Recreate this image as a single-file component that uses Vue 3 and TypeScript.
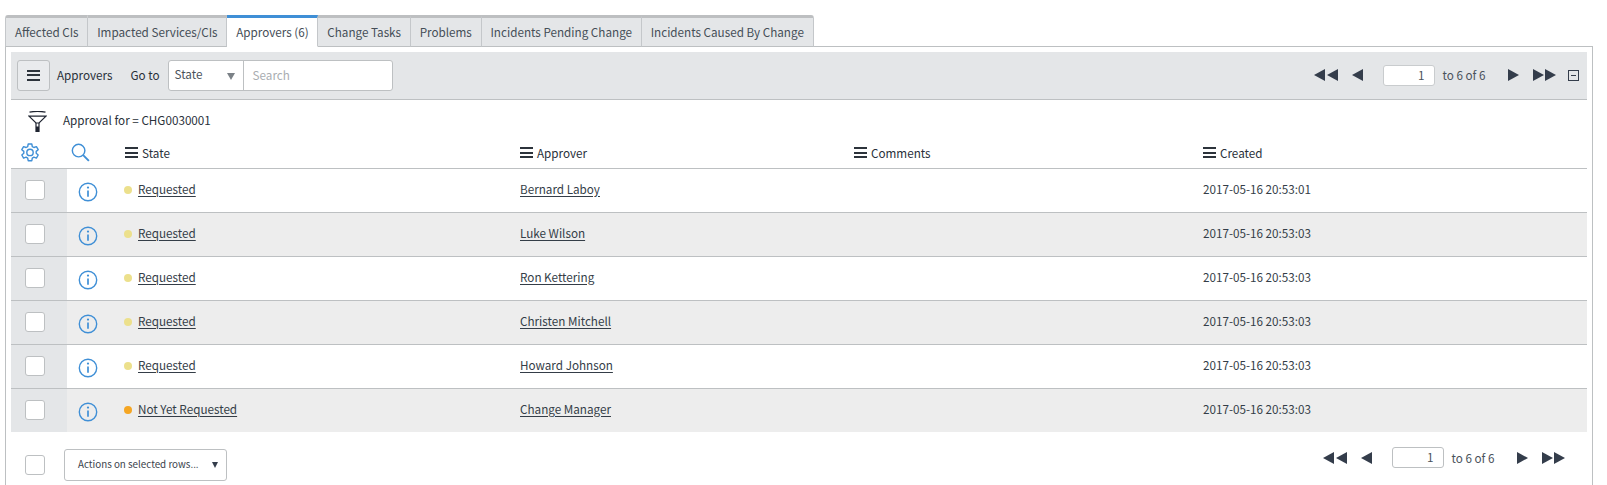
<script setup lang="ts">
const tabs = [
  { label: 'Affected CIs' },
  { label: 'Impacted Services/CIs' },
  { label: 'Approvers (6)', active: true },
  { label: 'Change Tasks' },
  { label: 'Problems' },
  { label: 'Incidents Pending Change' },
  { label: 'Incidents Caused By Change' },
]
const rows = [
  { state: 'Requested', dot: '#ece08c', approver: 'Bernard Laboy', created: '2017-05-16 20:53:01' },
  { state: 'Requested', dot: '#ece08c', approver: 'Luke Wilson', created: '2017-05-16 20:53:03' },
  { state: 'Requested', dot: '#ece08c', approver: 'Ron Kettering', created: '2017-05-16 20:53:03' },
  { state: 'Requested', dot: '#ece08c', approver: 'Christen Mitchell', created: '2017-05-16 20:53:03' },
  { state: 'Requested', dot: '#ece08c', approver: 'Howard Johnson', created: '2017-05-16 20:53:03' },
  { state: 'Not Yet Requested', dot: '#f5a623', approver: 'Change Manager', created: '2017-05-16 20:53:03' },
]
const columns = ['State', 'Approver', 'Comments', 'Created']
</script>

<template>
  <div class="page">
    <div class="tabs">
      <div v-for="t in tabs" :key="t.label" class="tab" :class="{ active: t.active }">{{ t.label }}</div>
    </div>
    <div class="panel">
      <div class="toolbar">
        <button class="menu-btn" aria-label="Menu"><span class="burger big"></span></button>
        <span class="title">Approvers</span>
        <span class="goto">Go to</span>
        <div class="search">
          <div class="field">State<span class="caret"></span></div>
          <div class="placeholder">Search</div>
        </div>
        <div class="pager">
          <span class="tri-l"></span><span class="tri-l"></span>
          <span class="tri-l solo"></span>
          <div class="page-input">1</div>
          <span class="count">to 6 of 6</span>
          <span class="tri-r solo-r"></span>
          <span class="tri-r"></span><span class="tri-r"></span>
          <span class="collapse"></span>
        </div>
      </div>

      <div class="filter">
        <svg class="funnel" width="19" height="21" viewBox="0 0 19 21" fill="none" stroke="#1f2430" stroke-width="1.2">
          <path d="M1.5 1.2C6 .2 13 .2 17.5 1.2" />
          <path d="M1 5.2h17L11 12H8z" />
          <path d="M8 12v8.4h3V12" />
          <path d="M8 15.5h3v5H8z" fill="#1f2430" stroke="none" />
        </svg>
        <span>Approval for = CHG0030001</span>
      </div>

      <div class="grid head">
        <div class="cell gear">
          <svg width="20" height="20" viewBox="0 0 20 20" fill="none" stroke="#3f8fd6" stroke-width="1.4" stroke-linejoin="round">
            <path d="M8.2 1h3.6l.5 2.6 1.6.9 2.5-.9 1.8 3.1-2 1.7v1.9l2 1.7-1.8 3.1-2.5-.9-1.6.9-.5 2.6H8.2l-.5-2.6-1.6-.9-2.5.9-1.8-3.1 2-1.7V8.4l-2-1.7 1.8-3.1 2.5.9 1.6-.9z" />
            <circle cx="10" cy="9.4" r="3.2" />
          </svg>
        </div>
        <div class="cell mag">
          <svg width="19" height="19" viewBox="0 0 20 20" fill="none" stroke="#3f8fd6">
            <circle cx="8" cy="8" r="6.6" stroke-width="1.5" />
            <path d="M12.8 12.8l6 6" stroke-width="2" />
          </svg>
        </div>
        <div v-for="c in columns" :key="c" class="cell col-head"><span class="burger"></span>{{ c }}</div>
      </div>

      <div v-for="(r, i) in rows" :key="i" class="grid row" :class="{ odd: i % 2 === 1, last: i === rows.length - 1 }">
        <div class="cell check"><span class="box"></span></div>
        <div class="cell info">
          <svg width="20" height="20" viewBox="0 0 20 20" fill="none" stroke="#3f8fd6">
            <circle cx="10" cy="10" r="8.7" stroke-width="1.4" />
            <path d="M10 8.5v6.2" stroke-width="1.7" />
            <circle cx="10" cy="5.6" r="1.1" fill="#3f8fd6" stroke="none" />
          </svg>
        </div>
        <div class="cell txt"><span class="dot" :style="{ background: r.dot }"></span><a>{{ r.state }}</a></div>
        <div class="cell txt"><a>{{ r.approver }}</a></div>
        <div class="cell txt"></div>
        <div class="cell txt">{{ r.created }}</div>
      </div>

      <div class="footer">
        <span class="box foot-box"></span>
        <div class="actions"><span>Actions on selected rows...</span><span class="caret dark"></span></div>
        <div class="pager foot-pager">
          <span class="tri-l"></span><span class="tri-l"></span>
          <span class="tri-l solo"></span>
          <div class="page-input outlined">1</div>
          <span class="count">to 6 of 6</span>
          <span class="tri-r solo-r"></span>
          <span class="tri-r"></span><span class="tri-r"></span>
        </div>
      </div>
    </div>
  </div>
</template>

<style>
html, body { margin: 0; background: #fff; overflow: hidden; }
</style>

<style scoped>
.page {
  width: 1607px;
  height: 485px;
  box-sizing: border-box;
  padding: 15px 14px 0 5px;
  overflow: hidden;
  font-family: "Noto Sans CJK SC", "Noto Sans", sans-serif;
  font-size: 11.7px;
  color: #343d47;
}
.tabs { display: flex; width: fit-content; height: 32px; position: relative; z-index: 1; }
.tab {
  box-sizing: border-box;
  height: 32px;
  padding: 0 8.8px;
  line-height: 28px;
  white-space: nowrap;
  background: #e4e6e8;
  border-top: 3px solid #bdbfc1;
  border-right: 1px solid #c4c7ca;
  border-bottom: 1px solid #bdc0c2;
  color: #454e57;
}
.tab:first-child { border-left: 1px solid #c4c7ca; border-top-left-radius: 3px; padding-left: 9px; }
.tab:last-child { border-top-right-radius: 3px; }
.tab.active { background: #fff; border-top-color: #3f8fd6; border-bottom-color: #fff; }
.panel {
  margin-top: -1px;
  box-sizing: border-box;
  height: 450px;
  border: 1px solid #bdc0c2;
  border-bottom: 0;
  padding: 5px 5px 0;
}
.toolbar {
  display: flex;
  align-items: center;
  height: 48px;
  box-sizing: border-box;
  background: #e4e6e8;
  border-bottom: 1px solid #bdc0c2;
  padding: 0 0 1px 6px;
}
.menu-btn {
  width: 33px;
  height: 31px;
  padding: 0;
  background: #e9ebed;
  border: 1px solid #bdc0c2;
  border-radius: 3px;
  display: flex;
  align-items: center;
  justify-content: center;
}
.burger {
  display: inline-block;
  width: 13px;
  height: 11px;
  margin-right: 4px;
  flex: none;
  background: linear-gradient(#2c333b 0 2px, transparent 2px 4.5px, #2c333b 4.5px 6.5px, transparent 6.5px 9px, #2c333b 9px 11px);
}
.burger.big { margin-right: 0; }
.title { margin: 0 0 2px 7px; color: #29303a; }
.goto { margin: 0 0 2px 18px; color: #29303a; }
.search {
  display: flex;
  height: 31px;
  width: 225px;
  margin-left: 8px;
  box-sizing: border-box;
  background: #fff;
  border: 1px solid #bdc0c2;
  border-radius: 3px;
}
.field {
  position: relative;
  box-sizing: border-box;
  width: 75px;
  padding-left: 6px;
  line-height: 26px;
  border-right: 1px solid #bdc0c2;
  color: #4a525b;
}
.caret {
  position: absolute;
  right: 8px;
  top: 12px;
  border-left: 4px solid transparent;
  border-right: 4px solid transparent;
  border-top: 7px solid #7b8187;
}
.placeholder { padding-left: 9px; line-height: 28px; color: #a9adb1; }
.pager { margin-left: auto; display: flex; align-items: center; }
.tri-l, .tri-r { display: inline-block; width: 0; height: 0; border-top: 6.5px solid transparent; border-bottom: 6.5px solid transparent; }
.tri-l { border-right: 11px solid #343d4b; margin-right: 1.5px; }
.tri-r { border-left: 11px solid #343d4b; margin-left: 1.5px; }
.tri-l.solo { margin-left: 12.5px; margin-right: 20px; }
.tri-r.solo-r { margin-left: 20px; margin-right: 12.5px; }
.page-input {
  box-sizing: border-box;
  width: 52px;
  height: 21px;
  background: #fff;
  border: 1px solid #c9ccce;
  border-radius: 3px;
  text-align: right;
  padding-right: 9px;
  line-height: 18px;
  color: #4a525b;
}
.page-input.outlined { border-color: #bdc0c2; }
.count { margin: 0 0 1px 8px; width: 45px; white-space: nowrap; color: #4a525b; }
.collapse {
  position: relative;
  box-sizing: border-box;
  width: 11px;
  height: 11px;
  margin: 0 8px 0 12px;
  border: 1px solid #343d4b;
}
.collapse::after {
  content: "";
  position: absolute;
  left: 2px;
  right: 2px;
  top: 4px;
  height: 1px;
  background: #343d4b;
}
.filter {
  display: flex;
  align-items: center;
  box-sizing: border-box;
  height: 37px;
  padding: 2px 0 0 17px;
  color: #29303a;
}
.funnel { margin-right: 16px; flex: none; margin-top: 3px; }
.grid {
  display: grid;
  grid-template-columns: 56px 58px 395px 334px 349px 1fr;
}
.cell { display: flex; align-items: center; min-width: 0; }
.head { height: 31px; border-bottom: 1px solid #bdc0c2; box-sizing: content-box; color: #29303a; }
.gear { padding-left: 9px; }
.mag { padding-left: 4px; }
.row { height: 43px; border-bottom: 1px solid #bdc0c2; }
.row.last { border-bottom: 0; }
.row.odd { background: #ededed; }
.row a { color: #343d47; text-decoration: underline; text-underline-offset: 2px; }
.txt { padding-bottom: 5px; }
.check { background: #e4e6e8; padding-left: 14px; padding-bottom: 1px; }
.info { padding-left: 11px; padding-top: 3px; }
.dot { width: 8px; height: 8px; border-radius: 50%; margin: 4px 6px 0 -1px; flex: none; }
.box {
  display: block;
  box-sizing: border-box;
  width: 20px;
  height: 20px;
  background: #fff;
  border: 1px solid #bdc0c2;
  border-radius: 3px;
}
.footer { display: flex; align-items: center; height: 66px; }
.foot-box { margin-left: 14px; flex: none; }
.actions {
  position: relative;
  box-sizing: border-box;
  width: 163px;
  height: 32px;
  margin-left: 19px;
  padding-left: 13px;
  line-height: 29px;
  font-size: 9.8px;
  border: 1px solid #bdc0c2;
  border-radius: 3px;
  background: #fff;
  color: #3a424b;
}
.caret.dark { border-left-width: 3px; border-right-width: 3px; border-top: 6px solid #343d4b; right: 8px; }
.foot-pager { padding-right: 22px; margin-bottom: 15px; }
</style>
